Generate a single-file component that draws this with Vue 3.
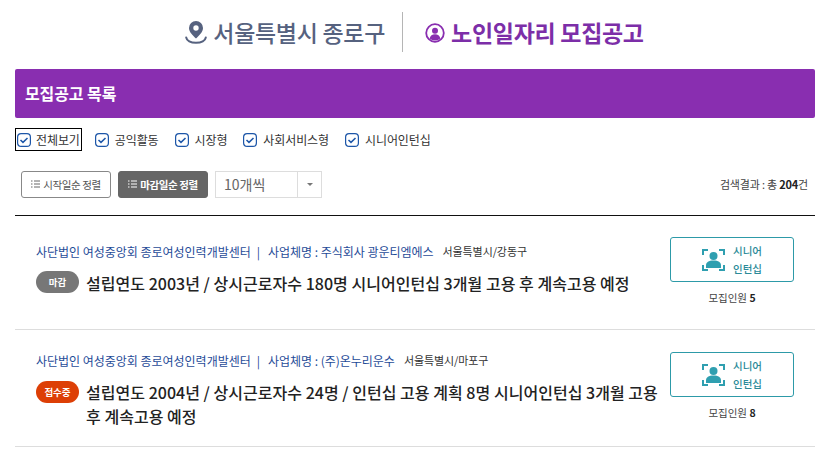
<script setup>
const filters = [
  { label: '전체보기', focus: true },
  { label: '공익활동' },
  { label: '시장형' },
  { label: '사회서비스형' },
  { label: '시니어인턴십' },
]
const jobs = [
  {
    org: '사단법인 여성중앙회 종로여성인력개발센터',
    biz: '사업체명 : 주식회사 광운티엠에스',
    area: '서울특별시/강동구',
    badge: '마감',
    open: false,
    title: '설립연도 2003년 / 상시근로자수 180명 시니어인턴십 3개월 고용 후 계속고용 예정',
    count: 5,
  },
  {
    org: '사단법인 여성중앙회 종로여성인력개발센터',
    biz: '사업체명 : (주)온누리운수',
    area: '서울특별시/마포구',
    badge: '접수중',
    open: true,
    title: '설립연도 2004년 / 상시근로자수 24명 / 인턴십 고용 계획 8명 시니어인턴십 3개월 고용 후 계속고용 예정',
    count: 8,
  },
]
</script>

<template>
  <div class="page">
    <header class="head">
      <svg class="pin" width="22" height="23" viewBox="0 0 22 23">
        <path fill="#56627f" fill-rule="evenodd" d="M11 0a7 7 0 0 0-7 7c0 4.200 4.200 7.800 7 10.500 2.800-2.700 7-6.300 7-10.500a7 7 0 0 0-7-7zm0 4.300a2.700 2.700 0 1 1 0 5.400 2.700 2.700 0 0 1 0-5.400z"/>
        <path fill="none" stroke="#56627f" stroke-width="2" stroke-linecap="round" d="M1.200 16.500c.5 3 4.300 5.300 9.800 5.300s9.300-2.300 9.800-5.300"/>
      </svg>
      <span class="region">서울특별시 종로구</span>
      <i class="vline"></i>
      <svg class="person" width="20" height="20" viewBox="0 0 20 20">
        <circle cx="10" cy="10" r="8.800" fill="none" stroke="#892eb0" stroke-width="1.800"/>
        <circle cx="10" cy="7.800" r="3" fill="#892eb0"/>
        <path fill="#892eb0" d="M4.600 15.600c.5-3 2.700-4.400 5.400-4.400s4.900 1.400 5.400 4.400c-1.400 1.300-3.300 2-5.400 2s-4-.7-5.400-2z"/>
      </svg>
      <h1 class="main">노인일자리 모집공고</h1>
    </header>

    <div class="banner">모집공고 목록</div>

    <div class="filters">
      <label v-for="f in filters" :key="f.label" class="filter" :class="{ focus: f.focus }">
        <svg width="14" height="14" viewBox="0 0 14 14">
          <rect x=".6" y=".6" width="12.800" height="12.800" rx="3.500" fill="#fff" stroke="#1d56a8" stroke-width="1.200"/>
          <path d="M3.500 7l2.500 2.400 4.500-4.400" fill="none" stroke="#1d56a8" stroke-width="1.500"/>
        </svg>
        <span>{{ f.label }}</span>
      </label>
    </div>

    <div class="tools">
      <button class="sort">
        <svg width="9" height="8" viewBox="0 0 9 8"><path d="M0 1h1.500M3 1h6M0 4h1.500M3 4h6M0 7h1.500M3 7h6" stroke="#666" stroke-width="1"/></svg>
        시작일순 정렬
      </button>
      <button class="sort on">
        <svg width="9" height="8" viewBox="0 0 9 8"><path d="M0 1h1.500M3 1h6M0 4h1.500M3 4h6M0 7h1.500M3 7h6" stroke="#fff" stroke-width="1"/></svg>
        마감일순 정렬
      </button>
      <div class="select">
        <span class="val">10개씩</span>
        <span class="arrow"><i></i></span>
      </div>
      <div class="result">검색결과 : 총 <b>204</b>건</div>
    </div>

    <ul class="list">
      <li v-for="j in jobs" :key="j.title" class="row">
        <div class="body" :class="{ single: !j.open }">
          <p class="meta">
            <span class="org">{{ j.org }}</span>
            <span class="sep">|</span>
            <span class="org">{{ j.biz }}</span>
            <span class="area">{{ j.area }}</span>
          </p>
          <div class="tline">
            <span class="badge" :class="{ open: j.open }">{{ j.badge }}</span>
            <h2 class="title">{{ j.title }}</h2>
          </div>
        </div>
        <div class="side" :class="{ double: j.open }">
          <div class="type">
            <svg width="23" height="22" viewBox="0 0 23 22">
              <path fill="none" stroke="#2f9fb0" stroke-width="2" d="M1 6V1h5M17 1h5v5M1 16v5h5M17 21h5v-5"/>
              <circle cx="11.500" cy="7" r="4" fill="#2f9fb0"/>
              <path fill="#2f9fb0" d="M4 19v-2.500c0-3.500 2.700-5 7.500-5s7.500 1.500 7.500 5V19z"/>
            </svg>
            <span class="tname">시니어<br>인턴십</span>
          </div>
          <div class="count">모집인원 <b>{{ j.count }}</b></div>
        </div>
      </li>
    </ul>
  </div>
</template>

<style>
html, body { margin: 0; background: #fff; overflow: hidden; }
</style>

<style scoped>
.page {
  width: 800px;
  margin-left: 15px;
  font-family: "Noto Sans CJK KR", "Noto Sans", sans-serif;
  color: #222;
}
.head {
  height: 69px;
  display: flex;
  align-items: center;
  justify-content: center;
  padding-bottom: 6px;
  padding-right: 1px;
  box-sizing: border-box;
}
.pin { margin-right: 6px; margin-top: 2px; }
.region { font-size: 23px; font-weight: 500; color: #56627f; letter-spacing: -0.3px; }
.vline { width: 1px; height: 40px; background: #b5b5b5; margin: 0 22px 0 17px; }
.person { margin-right: 6px; margin-top: 2px; }
.main { margin: 0; font-size: 23px; font-weight: 700; color: #7c2ea8; letter-spacing: -0.3px; }
.banner {
  height: 49px;
  line-height: 48px;
  padding-left: 10px;
  background: #892eb0;
  color: #fff;
  font-size: 16px;
  font-weight: 700;
  border-radius: 2px;
  letter-spacing: -0.1px;
}
.filters {
  display: flex;
  align-items: center;
  margin-top: 9px;
  height: 25px;
}
.filter {
  display: flex;
  align-items: center;
  gap: 6px;
  font-size: 12px;
  color: #333;
  height: 23px;
  margin-right: 12px;
  padding: 0 2px;
  box-sizing: border-box;
  letter-spacing: -0.1px;
}
.filter.focus { border: 1px solid #000; padding: 0 1px; margin-right: 11px; gap: 5px; }
.tools {
  display: flex;
  align-items: center;
  margin-top: 18px;
  padding-left: 6px;
  height: 28px;
}
.sort {
  height: 27px;
  width: 90px;
  margin-right: 7px;
  padding: 0;
  border: 1px solid #888;
  border-radius: 3px;
  background: #fff;
  color: #555;
  font: inherit;
  font-size: 10.500px;
  letter-spacing: -0.4px;
  display: flex;
  align-items: center;
  justify-content: center;
  gap: 3px;
}
.sort.on { background: #666; border-color: #666; color: #fff; font-weight: 700; }
.select {
  display: flex;
  width: 107px;
  height: 27px;
  border: 1px solid #ddd;
  box-sizing: border-box;
  color: #666;
  font-size: 14px;
}
.val { flex: 1; padding-left: 8px; line-height: 25px; }
.arrow {
  width: 23px;
  border-left: 1px solid #ddd;
  display: flex;
  align-items: center;
  justify-content: center;
}
.arrow i {
  border: 3px solid transparent;
  border-top: 3px solid #777;
  border-bottom: 0;
}
.result { margin-left: auto; margin-right: 7px; font-size: 11px; color: #444; letter-spacing: -0.2px; }
.result b { color: #222; }
.list {
  list-style: none;
  margin: 17px 0 0;
  padding: 0;
  border-top: 1px solid #111;
}
.row {
  display: flex;
  align-items: flex-start;
  padding: 20px 21px 18px;
  border-bottom: 1px solid #ddd;
}
.body { width: 634px; flex: none; }
.body.single { margin-top: 5px; }
.body.single .badge { margin-top: 0; }
.meta {
  margin: 0;
  height: 20px;
  display: flex;
  align-items: center;
  font-size: 12px;
  white-space: nowrap;
  letter-spacing: -0.02px;
}
.org { color: #1f4c98; }
.sep { color: #1f4c98; margin: 0 8px 0 6px; }
.area { color: #333; margin-left: 9px; font-size: 11px; letter-spacing: -0.1px; }
.tline { display: flex; align-items: flex-start; margin-top: 10px; }
.badge {
  flex: none;
  width: 43px;
  height: 22px;
  margin-top: 1px;
  margin-right: 7px;
  line-height: 22px;
  text-align: center;
  border-radius: 11px;
  background: #777;
  color: #fff;
  font-size: 9.500px;
  font-weight: 700;
}
.badge.open { background: #dd3f06; }
.title {
  margin: 0;
  font-size: 16px;
  line-height: 24px;
  font-weight: 500;
  color: #222;
  letter-spacing: 0.03px;
}
.side { width: 124px; flex: none; height: 75px; padding-top: 1px; box-sizing: border-box; }
.side.double { margin-top: 1px; }
.type {
  height: 45px;
  border: 1px solid #2d9aa8;
  border-radius: 3px;
  box-sizing: border-box;
  display: flex;
  align-items: center;
  justify-content: center;
  gap: 8px;
}
.tname { font-size: 10.500px; line-height: 18px; font-weight: 500; color: #2b8a98; text-align: left; }
.count { margin-top: 7px; text-align: center; font-size: 10.500px; color: #444; line-height: 18px; }
.count b { color: #222; }
</style>
